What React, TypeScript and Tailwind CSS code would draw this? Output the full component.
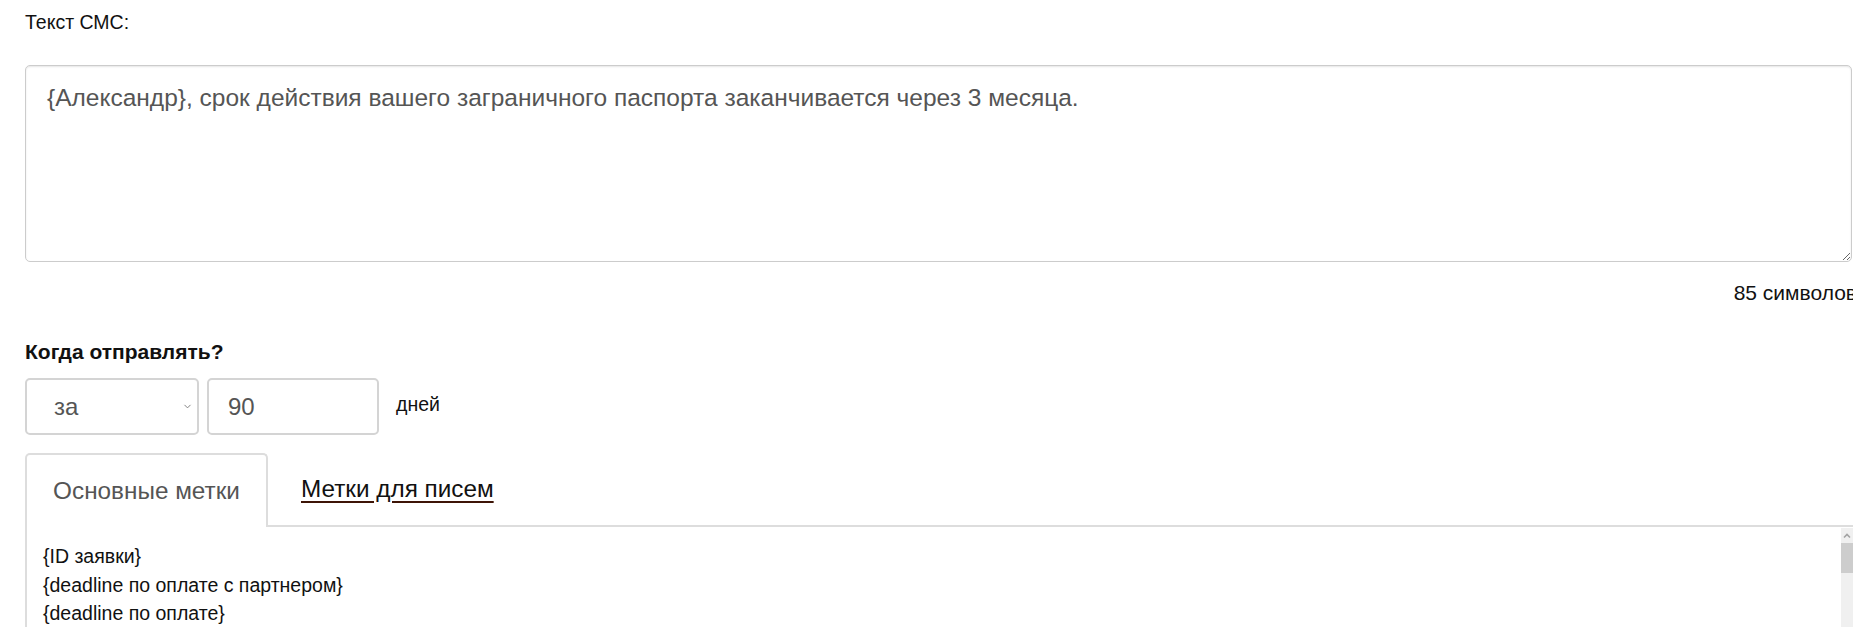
import { ChevronDown } from "lucide-react";

const tags = ["{ID заявки}", "{deadline по оплате с партнером}", "{deadline по оплате}"];

export default function App() {
  return (
    <div className="w-[1853px] h-[627px] overflow-hidden bg-white font-['Liberation_Sans',Arial,sans-serif]">
      <div className="w-[1880px] pl-[25px] pr-[1px]">
        {/* SMS text */}
        <div className="pt-[8px] text-[19.5px] leading-[28px] text-[#111]">Текст СМС:</div>
        <textarea
          className="mt-[29px] block w-[1827px] h-[197px] resize-y rounded-[5px] border border-[#ccc] px-[21px] pt-[15px] pb-[10px] text-[24.5px] leading-[34px] text-[#555] shadow-[inset_0_1px_2px_rgba(0,0,0,0.1)] outline-none"
          defaultValue="{Александр}, срок действия вашего заграничного паспорта заканчивается через 3 месяца."
        />
        <div className="w-[1827px] flex justify-end">
          <div className="mr-[-5px] mt-[16px] text-[21px] leading-[30px] text-[#111]">85 символов</div>
        </div>

        {/* When to send */}
        <div className="mt-[29px] text-[21px] leading-[30px] font-bold text-[#111]">Когда отправлять?</div>
        <div className="mt-[11px] flex items-center gap-[8px]">
          <div className="w-[174px] h-[57px] flex items-center justify-between rounded-[5px] border-2 border-[#d4d4d4] pl-[27px] pr-[4px] text-[24px] text-[#555]">
            <span>за</span>
            <ChevronDown size={11} strokeWidth={2} className="text-[#777]" />
          </div>
          <div className="w-[172px] h-[57px] flex items-center rounded-[5px] border-2 border-[#d4d4d4] pl-[19px] text-[24px] text-[#555]">
            90
          </div>
          <div className="ml-[9px] -mt-[4px] text-[19.5px] text-[#111]">дней</div>
        </div>

        {/* Tabs */}
        <div className="mt-[18px] w-[1828px] flex items-end border-b-2 border-[#ddd]">
          <div className="-mb-[2px] h-[74px] w-[243px] flex items-center justify-center rounded-t-[5px] border-2 border-b-0 border-[#ddd] bg-white text-[24.3px] text-[#555]">
            Основные метки
          </div>
          <div className="h-[72px] flex items-center pl-[33px] text-[24.3px] text-[#111] underline decoration-[#3d1406] underline-offset-[4px]">
            Метки для писем
          </div>
        </div>
        <div className="w-[1828px] flex h-[110px] border-l-2 border-[#ddd]">
          <div className="flex-1 pl-[16px] pt-[15px] text-[19.5px] leading-[28.5px] text-[#111]">
            {tags.map((t) => (
              <div key={t}>{t}</div>
            ))}
          </div>
          <div className="w-[12px] mt-[1px] bg-[#f0f0f0] flex flex-col items-center">
            <svg width="10" height="10" viewBox="0 0 10 10" className="mt-[3px]">
              <path d="M2 6.5 L5 3.5 L8 6.5" stroke="#a3a3a3" strokeWidth="1.6" fill="none" />
            </svg>
            <div className="mt-[2px] w-full h-[30px] bg-[#cdcdcd]" />
          </div>
        </div>
      </div>
    </div>
  );
}
